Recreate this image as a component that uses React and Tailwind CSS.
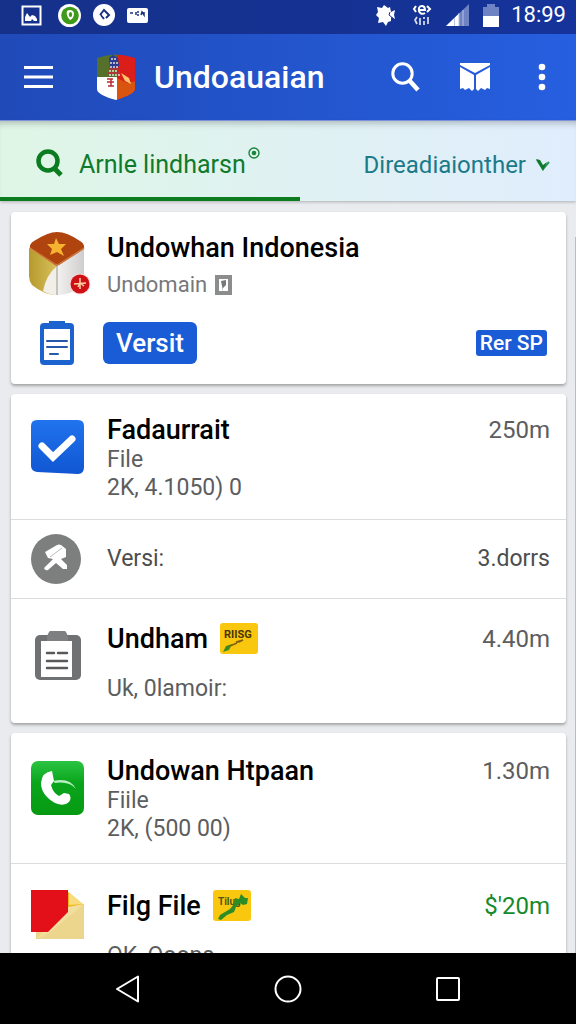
const FONT = 'font-[Roboto,"Liberation_Sans",sans-serif]';

function StatusBar() {
  return (
    <div className="flex h-[34px] shrink-0 items-center justify-between bg-linear-to-r from-[#15318a] to-[#15339a] pl-[21px] pr-[10px] pb-1">
      <div className="flex items-center gap-4">
        <svg width="21" height="21" viewBox="0 0 21 21">
          <rect x="1.5" y="1.5" width="18" height="18" fill="none" stroke="#fff" strokeWidth="2" />
          <path d="M4 16V12l2-4 3 4 2-2 3 1 2 3v2h-3l-2-2-1 2z" fill="#fff" />
        </svg>
        <svg width="23" height="23" viewBox="0 0 23 23">
          <circle cx="11.500" cy="11.500" r="11.500" fill="#fff" />
          <circle cx="12" cy="11.500" r="8.800" fill="#3f9a1c" />
          <path d="M9 7c3-2 6-1 7 2 0 3-1 6-4 7-2-2-4-5-3-9z" fill="#fff" />
          <ellipse cx="12.500" cy="10.500" rx="1.700" ry="2.600" fill="#3f9a1c" />
        </svg>
        <svg className="-ml-1" width="22" height="22" viewBox="0 0 22 22">
          <circle cx="11" cy="11" r="11" fill="#fff" />
          <path d="M7 11l4-5 5 5-3 3M8 11l3 4" fill="none" stroke="#1b3180" strokeWidth="2" />
          <path d="M9 11l2-2 2 2-2 2z" fill="#fff" />
        </svg>
        <svg className="-ml-1" width="21" height="15" viewBox="0 0 21 15">
          <rect width="21" height="15" rx="2" fill="#fff" />
          <path d="M3 5h3M9 4v3M10 4h2M10 7h2M14 7l1-3 2 3v-3" fill="none" stroke="#1b3180" strokeWidth="1.500" />
        </svg>
      </div>
      <div className="flex items-center">
        <svg className="mr-4" width="20" height="23" viewBox="0 0 20 23">
          <path d="M8 1l4 3 2-1 1 5 4-2-1 5 1 4-4-2v4l-3 1-2 4-3-4-5 1 1-5-3-3 2-3-1-5 5 1z" fill="#fff" />
          <path d="M14 8l-1 3 5 4" stroke="#15339a" fill="none" />
        </svg>
        <svg className="mr-[14px]" width="20" height="23" viewBox="0 0 20 23" fill="none" stroke="#fff" strokeWidth="2">
          <path d="M4 2L2 5l2 3M15 2l3 3-3 3M7 6h6c0-5-5-5-6-2-1 5 3 7 6 5" />
          <path d="M5 13l-2 3 2 4M8 14v7M12 13v2M12 17v4M16 13v7" strokeWidth="1.700" opacity=".85" />
        </svg>
        <svg className="mr-[14px]" width="23" height="22" viewBox="0 0 23 22">
          <path d="M0 22L23 0v22z" fill="#6e82c4" />
          <path d="M0 22L13 9.600V22z" fill="#fff" />
          <path d="M8.500 14v8M13 9v13M17 6v16" stroke="#b6c1e4" />
        </svg>
        <svg className="mr-3" width="16" height="23" viewBox="0 0 16 23">
          <path d="M4 0h8v3h4v10H0V3h4z" fill="#6e82c4" />
          <path d="M0 12h16v11H0z" fill="#fff" />
        </svg>
        <span className="text-[22px] leading-6 text-white">18:99</span>
      </div>
    </div>
  );
}

function Shield() {
  return (
    <svg width="40" height="46" viewBox="0 0 40 46">
      <defs>
        <clipPath id="shield">
          <path d="M1 4Q20-3 39 4v31q0 5-19 11Q1 41 1 35z" />
        </clipPath>
      </defs>
      <g clipPath="url(#shield)">
        <path d="M0 0h21v24H0z" fill="#54702b" />
        <path d="M21 0h19v46H21z" fill="#dc1e1b" />
        <path d="M21 24l10 5 9-2v19H21z" fill="#d9540f" />
        <path d="M0 23h21v23H0z" fill="#fff" />
        <path d="M13 4l4-3 5 3 1 8-3 4-6-2z" fill="#293c91" />
        <path d="M15 5h6M14 9h8M14 13h8M13 17h9M13 21h11" stroke="#e7dcd0" strokeWidth="1.300" strokeDasharray="2 1" />
        <path d="M13 15h10M12 19h12" stroke="#a93735" strokeWidth="2" />
        <path d="M25 19l8 5 2 6-6-3z" fill="#ffc66a" />
        <path d="M15 25v7M11 28h7M11 25h6M12 32h6" stroke="#b82d33" strokeWidth="1.500" />
      </g>
    </svg>
  );
}

function AppBar() {
  return (
    <header className="flex h-[87px] shrink-0 items-center border-b border-[#8298e4] bg-linear-to-r from-[#204ab8] to-[#265fe0] pl-6 pr-[30px] text-white">
      <button aria-label="Menu">
        <svg width="29" height="24" viewBox="0 0 29 24" stroke="#fff" strokeWidth="3">
          <path d="M0 2.500h29M0 12h29M0 21.500h29" />
        </svg>
      </button>
      <div className="ml-[43px]"><Shield /></div>
      <h1 className="ml-[18px] flex-1 text-[32px] leading-10 font-medium">Undoauaian</h1>
      <button aria-label="Search">
        <svg width="29" height="30" viewBox="0 0 29 30" fill="none" stroke="#fff">
          <circle cx="11.500" cy="11.500" r="9.700" strokeWidth="3" />
          <path d="M18 18l9 10" strokeWidth="4.500" />
        </svg>
      </button>
      <button aria-label="Messages" className="ml-10">
        <svg width="30" height="28" viewBox="0 0 30 28" fill="#fff">
          <path d="M0 0h30v2L15 10 0 2z" />
          <path d="M0 4l14 8v14l-2 2-3-3-4 2-2-2-3 1zM30 4l-14 8v14l2 2 3-3 4 2 2-2 3 1z" />
        </svg>
      </button>
      <button aria-label="More" className="ml-[48px]">
        <svg width="8" height="28" viewBox="0 0 8 28" fill="#fff">
          <circle cx="4" cy="4" r="3.300" />
          <circle cx="4" cy="14" r="3.300" />
          <circle cx="4" cy="24" r="3.300" />
        </svg>
      </button>
    </header>
  );
}

function Tabs() {
  return (
    <nav className="relative z-10 flex h-20 shrink-0 bg-linear-to-r from-[#dff6e6] to-[#e0edfd] shadow-[0_1px_3px_rgba(0,0,0,0.25),inset_0_7px_7px_-5px_rgba(0,0,0,0.25)]">
      <button className="flex w-[52%] items-center border-b-4 border-[#0b7c20] pl-9 pt-2 text-[25px] text-[#107a2c]">
        <svg width="27" height="28" viewBox="0 0 27 28" fill="none" stroke="#0b7c20">
          <circle cx="12" cy="12" r="9.500" strokeWidth="4.500" />
          <path d="M17 18l8 8" strokeWidth="5" />
        </svg>
        <span className="ml-4 pt-1">Arnle lindharsn</span>
        <svg className="ml-[2px] mb-5" width="12" height="12" viewBox="0 0 12 12">
          <circle cx="6" cy="6" r="5" fill="none" stroke="#16863a" strokeWidth="1.400" />
          <circle cx="6" cy="6" r="2.300" fill="#16863a" />
        </svg>
      </button>
      <button className="flex flex-1 items-center justify-end pr-[26px] pt-2 text-[24px] text-[#1b7a8a]">
        Direadiaionther
        <svg className="ml-[10px]" width="14" height="12" viewBox="0 0 14 12">
          <path d="M1 1l6 9 6-7" fill="none" stroke="#2a9a60" strokeWidth="2" />
          <path d="M0 0l4 1 3 5 4-3-4 9z" fill="#107a2c" />
        </svg>
      </button>
    </nav>
  );
}

function CubeIcon() {
  return (
    <svg width="62" height="66" viewBox="0 0 62 66">
      <defs>
        <linearGradient id="side" x1="0" x2="1">
          <stop offset="0" stopColor="#b69a2e" />
          <stop offset="1" stopColor="#d8c05b" />
        </linearGradient>
        <linearGradient id="front" x1="0" x2="1">
          <stop offset="0" stopColor="#f3f2f1" />
          <stop offset="1" stopColor="#cfcdcd" />
        </linearGradient>
      </defs>
      <path d="M1 18l28 16v31Q16 65 4 55 1 51 1 46z" fill="url(#side)" />
      <path d="M29 36v29q-8 0-14-4 3-16 14-25z" fill="#f2efe8" />
      <path d="M29 34l27-17v31q0 5-5 9-8 8-22 8z" fill="url(#front)" />
      <path d="M29 35v30" stroke="#a9a5a0" strokeWidth="1.200" />
      <path d="M2 18Q1 14 6 11 20 2 29 2q10 0 23 9 5 3 4 8L31 35q-2 1-4 0z" fill="#af440f" />
      <path d="M2 18l25 16q2 1 4 0l25-16" fill="none" stroke="#d37b3c" strokeWidth="1.200" />
      <path d="M28 8l3 6 7 0-5 5 3 7-7-4-7 3 2-6-5-5 7 0z" fill="#f5b32f" />
      <circle cx="52" cy="54" r="10.500" fill="#f7dad6" />
      <circle cx="52" cy="54" r="9.500" fill="#ce1117" />
      <path d="M52 48v11M46 54l12-1M50 57l2-4 4 3" stroke="#ffd3a4" strokeWidth="1.500" fill="none" />
    </svg>
  );
}

function BlueClipboard() {
  return (
    <svg width="34" height="46" viewBox="0 0 34 46">
      <rect y="3" width="34" height="42" rx="4" fill="#1c63cf" />
      <path d="M9 1h16v7H9z" fill="#1c63cf" />
      <rect x="4" y="9" width="26" height="31" fill="#fff" />
      <path d="M7 21h20M7 27h20M10 34h8" stroke="#245aa9" strokeWidth="2" strokeLinecap="round" />
    </svg>
  );
}

function CheckIcon() {
  return (
    <svg width="53" height="54" viewBox="0 0 53 54">
      <defs>
        <linearGradient id="check" x2="0" y2="1">
          <stop stopColor="#2173ee" />
          <stop offset="1" stopColor="#1056d3" />
        </linearGradient>
      </defs>
      <path d="M6 0h41q6 0 6 6v41q0 7-6 7L6 52q-6-1-6-6V6q0-6 6-6z" fill="url(#check)" />
      <path d="M11 26l11 11 19-18" fill="none" stroke="#fff" strokeWidth="7" strokeLinecap="round" />
    </svg>
  );
}

function ToolIcon() {
  return (
    <svg width="50" height="50" viewBox="0 0 50 50">
      <circle cx="25" cy="25" r="25" fill="#7d7e7e" />
      <path d="M14 18l12-7q2-1 4 0l5 4v8l-5 2 6 6v4h-4l-7-6-8 7q-3 1-4-2l9-9-5-1z" fill="#fff" />
      <path d="M19 23l12-9" stroke="#b9baba" />
    </svg>
  );
}

function GreyClipboard() {
  return (
    <svg className="ml-1" width="46" height="49" viewBox="0 0 46 49">
      <rect y="4" width="46" height="45" rx="5" fill="#707172" />
      <path d="M14 1q0-1 2-1h13q2 0 2 1l2 4v5H12V5z" fill="#7e7f80" />
      <path d="M6 10h31v36H6z" fill="#fff" />
      <path d="M12 22h7M23 22h9M12 30h20M12 37h20" stroke="#58595a" strokeWidth="2.500" strokeLinecap="round" />
    </svg>
  );
}

function PhoneIcon() {
  return (
    <svg width="53" height="54" viewBox="0 0 53 54">
      <defs>
        <linearGradient id="phone" x2="0" y2="1">
          <stop stopColor="#2bc443" />
          <stop offset=".4" stopColor="#0aa51c" />
          <stop offset="1" stopColor="#069a12" />
        </linearGradient>
      </defs>
      <rect width="53" height="54" rx="7" fill="url(#phone)" />
      <path d="M21 10q-10 1-11 12 0 12 14 20 9 4 14-1 3-4 0-8l-5-1-5 3q-6-3-8-11l3-4z" fill="#fff" />
      <path d="M22 20q17-4 23 8-7-8-21-6" fill="#b7efbe" />
    </svg>
  );
}

function FolderIcon() {
  return (
    <svg width="54" height="50" viewBox="0 0 54 50">
      <path d="M5 14h48v35H5z" fill="#ecd68d" />
      <path d="M36 1l17 14-17 4z" fill="#f0b81e" />
      <path d="M38 3l14 11-14 1z" fill="#f8dc7d" />
      <path d="M37 17l16-3L18 43l-13 6z" fill="#f2df9f" />
      <path d="M0 0h37v22L17 42H0z" fill="#e31019" />
    </svg>
  );
}

function Tag({ label, leafy }) {
  return (
    <svg width="38" height="32" viewBox="0 0 38 32">
      <rect width="38" height="31" rx="3" fill="#f9c80e" />
      <text x={leafy ? 5 : 4} y="15" fontSize={leafy ? 10 : 11} fontWeight="700" fill={leafy ? '#4f5718' : '#4b3508'} fontFamily="Roboto">{label}</text>
      {leafy ? (
        <path d="M5 29l2-4 10-6 4-5 1-6 4 1 2-5 4 4 3 0-1 6-4 1-3-2-4 4-2 5-7 3-6 5z" fill="#2c8c25" />
      ) : (
        <>
          <path d="M3 29l3-6 6-2-3 6z" fill="#3e8c20" />
          <path d="M10 23l7-3M16 19l7-2-4 2z" stroke="#855f0b" strokeWidth="1.500" fill="none" />
        </>
      )}
    </svg>
  );
}

function Row({ icon, title, tag, amount, amountColor = 'text-[#5c5d5e]', className, iconClass = 'pt-2', children }) {
  return (
    <li className={`flex items-start gap-6 border-b border-[#dcdddf] pl-5 pr-4 last:border-b-0 ${className}`}>
      <div className={`w-[52px] shrink-0 ${iconClass}`}>{icon}</div>
      <div className="min-w-0 flex-1 whitespace-nowrap text-[23px] leading-7 text-[#5c5d5e]">
        <h2 className="flex items-center gap-3 text-[27px] leading-8 font-medium text-black">{title}{tag}</h2>
        {children}
      </div>
      <span className={`text-[24px] leading-8 ${amountColor}`}>{amount}</span>
    </li>
  );
}

const card = 'rounded bg-white shadow-[0_2px_3px_rgba(0,0,0,0.3)]';

export default function App() {
  return (
    <div className={`flex h-screen flex-col overflow-hidden bg-[#e9ebee] ${FONT}`}>
      <StatusBar />
      <AppBar />
      <Tabs />
      <div className="flex min-h-0 flex-1 overflow-hidden">
        <main className="flex min-w-0 flex-1 flex-col gap-[10px] pl-[11px] pr-[9px] pt-[11px]">
          <section className={`${card} shrink-0 pb-[18px] pl-[17px] pr-[19px] pt-[18px]`}>
            <div className="flex items-start gap-[17px]">
              <CubeIcon />
              <div>
                <h2 className="text-[27px] leading-9 font-medium text-black">Undowhan Indonesia</h2>
                <p className="flex items-center gap-2 pt-px text-[22px] leading-9 text-[#77787a]">
                  Undomain
                  <svg width="17" height="20" viewBox="0 0 17 20">
                    <path d="M2 2h13v16H2z" fill="#fff" stroke="#8b8c8e" strokeWidth="4" />
                    <path d="M6 6l5-1v5l-3 3v3l-1-5z" fill="#77787a" />
                  </svg>
                </p>
              </div>
            </div>
            <div className="mt-[17px] flex items-center pl-3">
              <BlueClipboard />
              <button className="ml-[29px] h-[42px] rounded-md bg-[#1a5bd6] px-[13px] text-[26px] leading-8 font-medium text-white">Versit</button>
              <button className="ml-auto h-[26px] rounded-[3px] bg-[#1a5bd6] px-1 text-[21px] leading-6 font-medium text-white">Rer SP</button>
            </div>
          </section>

          <ul className={`${card} shrink-0`}>
            <Row className="h-[126px] pt-5" icon={<CheckIcon />} iconClass="pt-[6px]" title="Fadaurrait" amount="250m">
              <p>File</p>
              <p>2K, 4.1050) 0</p>
            </Row>
            <li className="flex h-[79px] items-center border-b border-[#dcdddf] pl-5 pr-4 text-[23px] text-[#4c4d4e]">
              <ToolIcon />
              <span className="ml-[26px] flex-1">Versi:</span>
              <span>3.dorrs</span>
            </li>
            <Row className="h-[124px] pt-6" icon={<GreyClipboard />} title="Undham" tag={<Tag label="RIISG" />} amount="4.40m">
              <p className="mt-5">Uk, 0lamoir:</p>
            </Row>
          </ul>

          <ul className={`${card} shrink-0`}>
            <Row className="h-[131px] pt-[22px]" icon={<PhoneIcon />} iconClass="pt-[6px]" title="Undowan Htpaan" amount="1.30m">
              <p>Fiile</p>
              <p>2K, (500 00)</p>
            </Row>
            <Row className="h-[124px] pt-[26px]" icon={<FolderIcon />} iconClass="pt-0" title="Filg File" tag={<Tag label="Tilug" leafy />} amount="$'20m" amountColor="text-[#158a2b]">
              <p className="mt-5">OK, Ooops</p>
            </Row>
          </ul>
        </main>
        <div className="mt-9 w-px bg-[#b9bcc0]" />
      </div>
      <footer className="flex h-[71px] shrink-0 items-center justify-between bg-black pl-[115px] pr-[115px]">
        <button aria-label="Back">
          <svg width="26" height="28" viewBox="0 0 26 28" fill="none" stroke="#fff" strokeWidth="2">
            <path d="M2 14L23 1.500v25z" strokeLinejoin="round" />
          </svg>
        </button>
        <button aria-label="Home">
          <svg width="28" height="28" viewBox="0 0 28 28" fill="none" stroke="#fff" strokeWidth="2">
            <circle cx="14" cy="14" r="12.500" />
          </svg>
        </button>
        <button aria-label="Recent apps">
          <svg width="26" height="26" viewBox="0 0 26 26" fill="none" stroke="#fff" strokeWidth="2">
            <rect x="2" y="2" width="22" height="22" rx="1" />
          </svg>
        </button>
      </footer>
    </div>
  );
}
